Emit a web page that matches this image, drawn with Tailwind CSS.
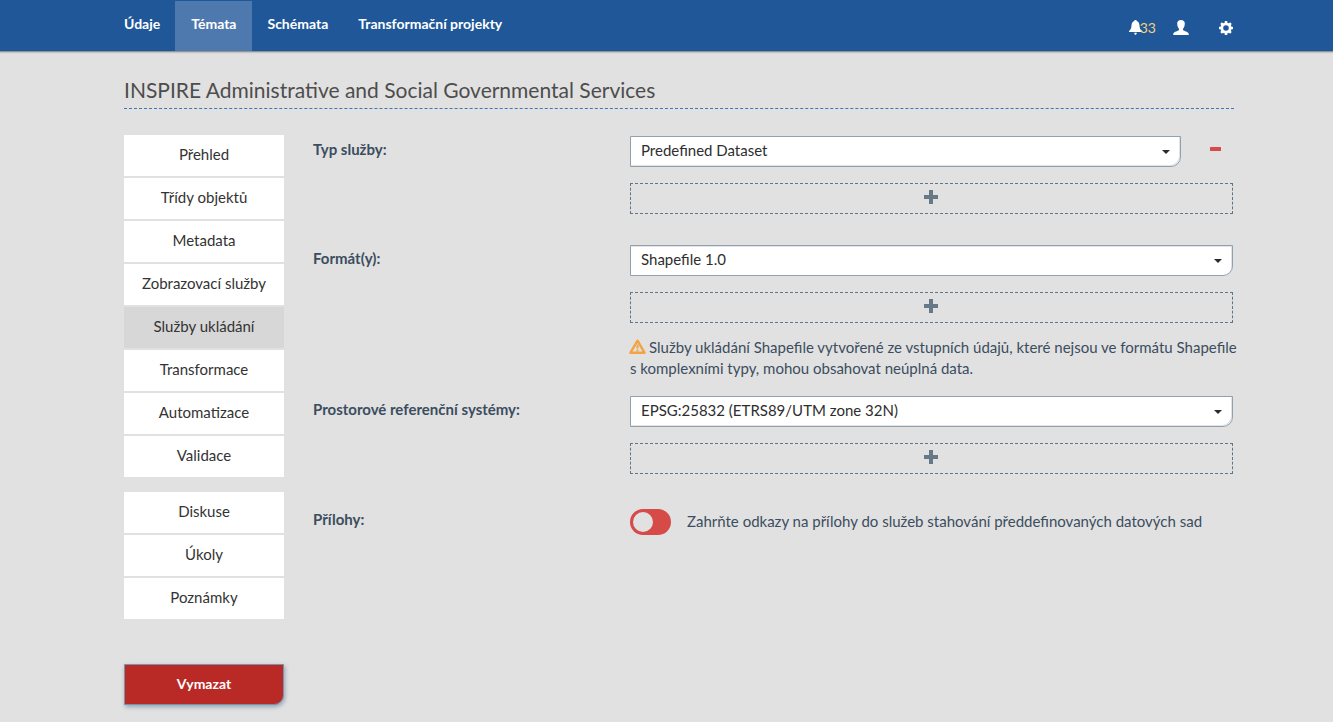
<!DOCTYPE html>
<html lang="cs">
<head>
<meta charset="utf-8">
<meta name="viewport" content="width=device-width, initial-scale=1">
<title>INSPIRE Administrative and Social Governmental Services</title>
<script src="https://cdn.jsdelivr.net/npm/@tailwindcss/browser@4"></script>
</head>
<body class="min-h-screen bg-[#e1e1e1] font-['Lato',sans-serif] text-[15px] leading-[21px] text-[#3b4d5e]">

<header class="border-b border-[#8f9499] bg-[#205798] pl-[25px] text-white shadow-[0_1px_1px_#c4c4c4]">
  <div class="mx-auto flex max-w-[1110px] justify-between">
    <nav class="flex pt-px text-sm/[21px] font-bold">
      <a href="#" class="h-[50px] pt-3 pr-[15px]">Údaje</a>
      <a href="#" aria-current="page" class="h-[50px] bg-[#4e79ae] px-4 pt-3">Témata</a>
      <a href="#" class="h-[50px] px-[15px] pt-3">Schémata</a>
      <a href="#" class="h-[50px] px-[15px] pt-3">Transformační projekty</a>
    </nav>
    <div class="flex items-center pt-1">
      <button type="button" aria-label="Oznámení" class="flex items-center text-[#f2d27a]">
        <svg class="h-[15px] w-[13px] text-white" viewBox="0 0 13 15" fill="currentColor"><path d="M6.500 0C5.700 0 5.300.5 5.200 1C3.300 1.600 2.600 3.300 2.500 5.500C2.400 8.200 1.700 9.700 0 11V12H13V11C11.300 9.700 10.600 8.200 10.500 5.500C10.400 3.300 9.700 1.600 7.800 1C7.700.5 7.300 0 6.500 0ZM5.200 12.700C5.300 14 5.900 14.800 6.500 14.800C7.100 14.800 7.700 14 7.800 12.700Z"/></svg><span class="-ml-0.5 text-sm">33</span>
      </button>
      <button type="button" aria-label="Uživatel" class="ml-[17px]">
        <svg class="h-[15px] w-4" viewBox="0 0 16 15" fill="currentColor"><path d="M8 0C5.600 0 4.200 1.300 4.200 3.300C4.200 5 4.500 7 5.800 8.500C6.100 9 6.200 10 5.500 10.400C3.500 11.300.5 12 .3 13.800V15H15.700V13.800C15.500 12 12.500 11.300 10.500 10.400C9.800 10 9.900 9 10.200 8.500C11.500 7 11.800 5 11.800 3.300C11.800 1.300 10.400 0 8 0Z"/></svg>
      </button>
      <button type="button" aria-label="Nastavení" class="ml-[29px]">
        <svg class="h-4 w-4" viewBox="0 0 16 16"><circle cx="8" cy="8" r="4.200" fill="none" stroke="currentColor" stroke-width="2.800"/><path d="M8 1V3.500M8 12.500V15M1 8H3.500M12.500 8H15M3.100 3.100L4.800 4.800M11.200 11.200L12.900 12.900M3.100 12.900L4.800 11.200M11.200 4.800L12.900 3.100" stroke="currentColor" stroke-width="2.500"/></svg>
      </button>
    </div>
  </div>
</header>

<div class="pl-[25px]">
  <div class="mx-auto max-w-[1110px]">
    <h1 class="border-b border-dashed border-[#3f76b5] pt-6 pb-1 text-[21px] leading-7 text-[#4d4d4d]">INSPIRE Administrative and Social Governmental Services</h1>

    <div class="flex pt-[26px]">
      <aside class="w-40 shrink-0 text-center text-[#333]">
        <nav class="flex flex-col gap-0.5">
          <a href="#" class="bg-white pt-[9px] pb-[11px]">Přehled</a>
          <a href="#" class="bg-white pt-[9px] pb-[11px]">Třídy objektů</a>
          <a href="#" class="bg-white pt-[9px] pb-[11px]">Metadata</a>
          <a href="#" class="bg-white pt-[9px] pb-[11px]">Zobrazovací služby</a>
          <a href="#" aria-current="page" class="bg-[#d7d7d7] pt-[9px] pb-[11px]">Služby ukládání</a>
          <a href="#" class="bg-white pt-[9px] pb-[11px]">Transformace</a>
          <a href="#" class="bg-white pt-[9px] pb-[11px]">Automatizace</a>
          <a href="#" class="bg-white pt-[9px] pb-[11px]">Validace</a>
        </nav>
        <nav class="mt-[15px] flex flex-col gap-0.5">
          <a href="#" class="bg-white pt-[9px] pb-[11px]">Diskuse</a>
          <a href="#" class="bg-white pt-[9px] pb-[11px]">Úkoly</a>
          <a href="#" class="bg-white pt-[9px] pb-[11px]">Poznámky</a>
        </nav>
        <button type="button" class="mt-[45px] h-[41px] w-full rounded-br-[10px] border border-[#7b93a8] bg-[#b92a27] pb-0.5 text-sm font-bold text-white shadow-[1px_2px_4px_#8fa3b5]">Vymazat</button>
      </aside>

      <form class="ml-[29px] mt-px grid flex-1 grid-cols-[317px_1fr] content-start pr-px">
        <label for="service" class="pt-[3px] font-bold">Typ služby:</label>
        <div class="mb-[31px]">
          <div class="flex">
            <div class="relative flex-1">
              <select id="service" class="block h-[31px] w-full appearance-none rounded-br-[10px] border border-[#91a0ad] bg-white px-2.5 pb-0.5 text-[#2e2e2e] shadow-[inset_-1px_-1px_0_#e0e4e8]"><option>Predefined Dataset</option></select>
              <svg class="pointer-events-none absolute top-3.5 right-[11px] h-1 w-2" viewBox="0 0 8 4"><path d="M0 0H8L4 4Z" fill="#2b2b2b"/></svg>
            </div>
            <button type="button" aria-label="Odebrat" class="flex w-[52px] justify-end pt-[11px] pr-3"><svg class="h-1 w-[11px]" viewBox="0 0 11 4"><rect width="11" height="4" rx=".5" fill="#d64a47"/></svg></button>
          </div>
          <button type="button" aria-label="Přidat typ služby" class="mt-4 flex h-[31px] w-full justify-center border border-dashed border-[#627585] pt-[6px] pr-px"><svg class="h-3.5 w-3.5" viewBox="0 0 14 14"><path d="M5 0H9V5H14V9H9V14H5V9H0V5H5Z" fill="#677986"/></svg></button>
        </div>

        <label for="format" class="pt-[3px] font-bold">Formát(y):</label>
        <div class="mb-[17px]">
          <div class="relative">
            <select id="format" class="block h-[31px] w-full appearance-none rounded-br-[10px] border border-[#91a0ad] bg-white px-2.5 pb-0.5 text-[#2e2e2e] shadow-[inset_-1px_1px_0_#e0e4e8]"><option>Shapefile 1.0</option></select>
            <svg class="pointer-events-none absolute top-3.5 right-[11px] h-1 w-2" viewBox="0 0 8 4"><path d="M0 0H8L4 4Z" fill="#2b2b2b"/></svg>
          </div>
          <button type="button" aria-label="Přidat formát" class="mt-4 flex h-[31px] w-full justify-center border border-dashed border-[#627585] pt-[6px] pr-px"><svg class="h-3.5 w-3.5" viewBox="0 0 14 14"><path d="M5 0H9V5H14V9H9V14H5V9H0V5H5Z" fill="#677986"/></svg></button>
          <p class="mt-3.5 -mr-3"><svg class="-ml-px mr-[3px] inline-block h-[15px] w-[17px] align-[-1px]" viewBox="0 0 17 15"><path d="M8.500 1.700L15.500 13.700H1.500Z" fill="none" stroke="#f2a442" stroke-width="2.400" stroke-linejoin="round"/><path d="M8.500 5.500V9.500M8.500 10.500V12.500" stroke="#f2a442" stroke-width="2"/></svg>Služby ukládání Shapefile vytvořené ze vstupních údajů, které nejsou ve formátu Shapefile s&nbsp;komplexními typy, mohou obsahovat neúplná data.</p>
        </div>

        <label for="crs" class="pt-[3px] font-bold">Prostorové referenční systémy:</label>
        <div class="mb-[35px]">
          <div class="relative">
            <select id="crs" class="block h-[31px] w-full appearance-none rounded-br-[10px] border border-[#91a0ad] bg-white px-2.5 pb-0.5 text-[#2e2e2e] shadow-[inset_-1px_-1px_0_#e0e4e8]"><option>EPSG:25832 (ETRS89/UTM zone 32N)</option></select>
            <svg class="pointer-events-none absolute top-3.5 right-[11px] h-1 w-2" viewBox="0 0 8 4"><path d="M0 0H8L4 4Z" fill="#2b2b2b"/></svg>
          </div>
          <button type="button" aria-label="Přidat referenční systém" class="mt-4 flex h-[31px] w-full justify-center border border-dashed border-[#627585] pt-[6px] pr-px"><svg class="h-3.5 w-3.5" viewBox="0 0 14 14"><path d="M5 0H9V5H14V9H9V14H5V9H0V5H5Z" fill="#677986"/></svg></button>
        </div>

        <div class="font-bold">Přílohy:</div>
        <label class="flex items-center gap-4">
          <input type="checkbox" role="switch" class="h-[26px] w-[41px] shrink-0 appearance-none rounded-full bg-[#d64a47] before:mt-[3px] before:ml-[3px] before:block before:h-5 before:w-5 before:rounded-full before:bg-[#e1e1e1] checked:before:ml-[18px]">
          <span class="pb-0.5">Zahrňte odkazy na přílohy do služeb stahování předdefinovaných datových sad</span>
        </label>
      </form>
    </div>
  </div>
</div>
</body>
</html>
